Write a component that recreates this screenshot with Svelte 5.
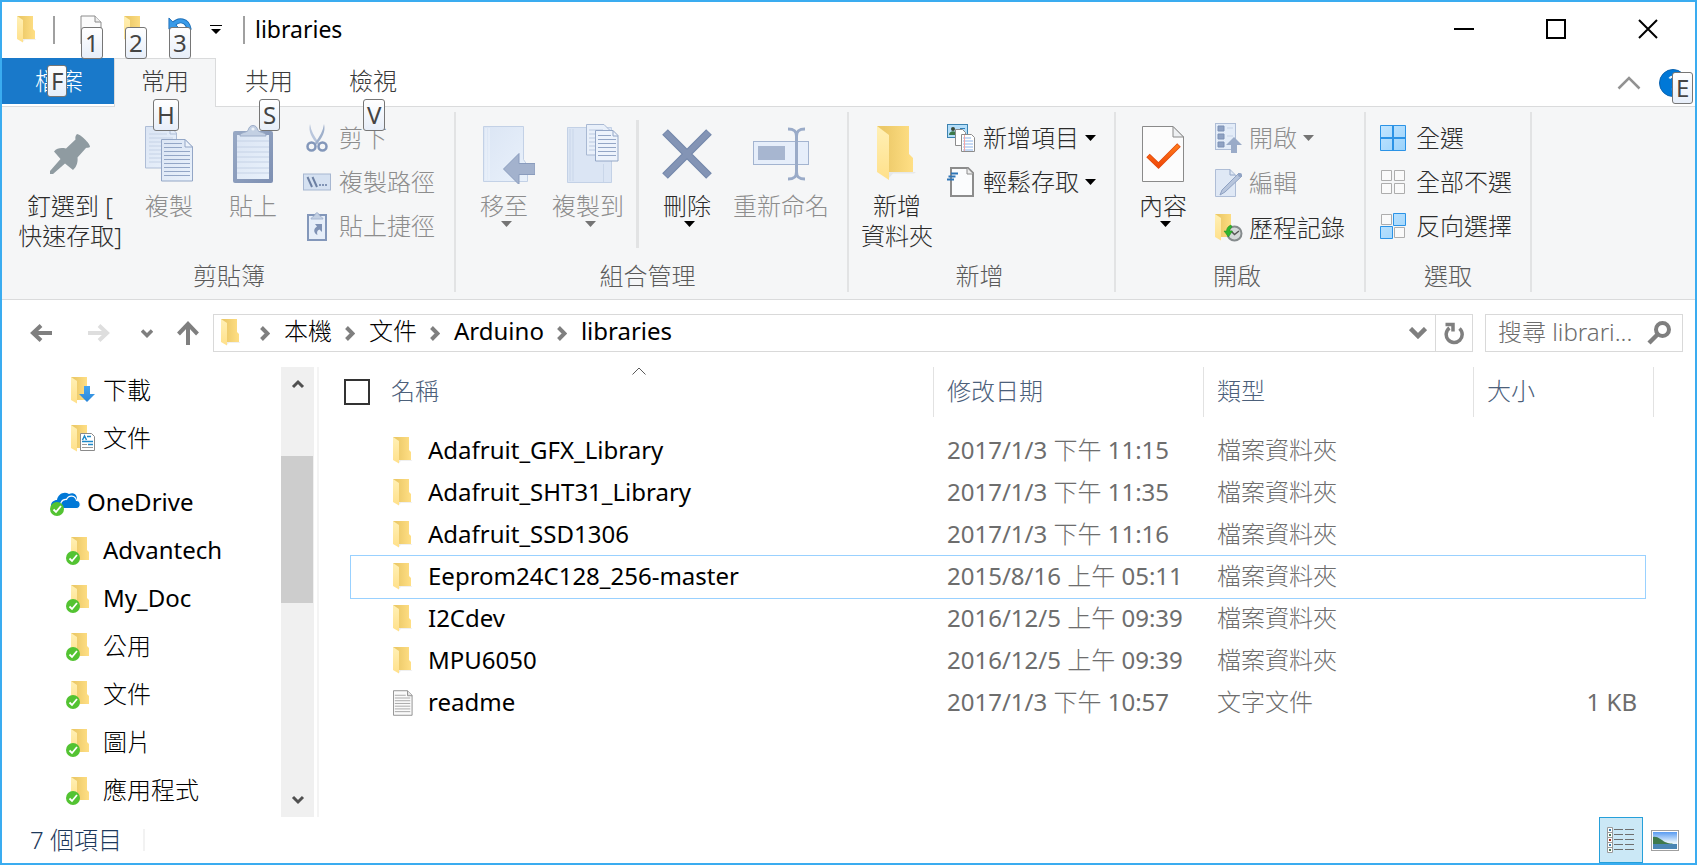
<script>
  const crumbs = ['本機', '文件', 'Arduino', 'libraries'];

  const quickAccess = [
    { name: '下載', badge: 'down' },
    { name: '文件', badge: 'doc' }
  ];
  const cloudFolders = ['Advantech', 'My_Doc', '公用', '文件', '圖片', '應用程式'];

  const files = [
    { name: 'Adafruit_GFX_Library', day: '2017/1/3', half: '下午', time: '11:15', type: '檔案資料夾', size: '' },
    { name: 'Adafruit_SHT31_Library', day: '2017/1/3', half: '下午', time: '11:35', type: '檔案資料夾', size: '' },
    { name: 'Adafruit_SSD1306', day: '2017/1/3', half: '下午', time: '11:16', type: '檔案資料夾', size: '' },
    { name: 'Eeprom24C128_256-master', day: '2015/8/16', half: '上午', time: '05:11', type: '檔案資料夾', size: '' },
    { name: 'I2Cdev', day: '2016/12/5', half: '上午', time: '09:39', type: '檔案資料夾', size: '' },
    { name: 'MPU6050', day: '2016/12/5', half: '上午', time: '09:39', type: '檔案資料夾', size: '' },
    { name: 'readme', day: '2017/1/3', half: '下午', time: '10:57', type: '文字文件', size: '1 KB', text: true }
  ];
  let focused = $state(3);
  let query = $state('');

  // Latin names are set in the regular weight, Chinese ones in the light weight.
  const isLatin = (s) => /^[A-Za-z]/.test(s);
</script>

{#snippet folder()}
  <svg class="folder" width="20" height="28" viewBox="0 0 20 28" aria-hidden="true">
    <path d="M5 23h14.500l-1 .8H8L6 26z" fill="#ececec" />
    <path d="M0 0h16v13l2 2v8H4z" fill="url(#fold-back)" />
    <path d="M0 0l6 4v22.500L0 23z" fill="url(#fold-front)" />
  </svg>
{/snippet}

{#snippet tick()}
  <circle cx="7" cy="7" r="7" fill="#53c332" />
  <path d="M3.500 7.500l2.500 2.500 5-6" fill="none" stroke="#fff" stroke-width="1.800" />
{/snippet}

{#snippet crumbArrow()}
  <svg width="10" height="15" viewBox="0 0 10 15" aria-hidden="true">
    <path d="M1.500 1.500L7.500 7.500l-6 6" fill="none" stroke="#7f7f7f" stroke-width="4" />
  </svg>
{/snippet}

{#snippet caret()}
  <svg class="caret" width="11" height="6" viewBox="0 0 11 6" aria-hidden="true">
    <path d="M0 0h11L5.500 6z" fill="currentColor" />
  </svg>
{/snippet}

{#snippet chevron(d)}
  <svg width="14" height="12" viewBox="0 0 14 12" aria-hidden="true">
    <path {d} fill="none" stroke="#505050" stroke-width="3" />
  </svg>
{/snippet}

<svg class="defs" width="0" height="0" aria-hidden="true">
  <defs>
    <linearGradient id="fold-back" x1="0" y1="0" x2="1" y2="0">
      <stop offset="0.2" stop-color="#ecc968" /><stop offset="1" stop-color="#ffdf85" />
    </linearGradient>
    <linearGradient id="fold-front" x1="0" y1="0" x2="0" y2="1">
      <stop offset="0" stop-color="#fff0b5" /><stop offset="1" stop-color="#ffe08a" />
    </linearGradient>
    <linearGradient id="blue-page" x1="0" y1="0" x2="1" y2="1">
      <stop offset="0" stop-color="#dbe5f4" /><stop offset="1" stop-color="#e9f1fb" />
    </linearGradient>
    <linearGradient id="board" x1="0" y1="0" x2="1" y2="1">
      <stop offset="0" stop-color="#98a9c5" /><stop offset="1" stop-color="#7e90b3" />
    </linearGradient>
    <linearGradient id="orange" x1="0" y1="0" x2="0" y2="1">
      <stop offset="0" stop-color="#ff7a1a" /><stop offset="1" stop-color="#f04a0a" />
    </linearGradient>
    <linearGradient id="down-blue" x1="0" y1="0" x2="0" y2="1">
      <stop offset="0" stop-color="#45a5f0" /><stop offset="1" stop-color="#2b87d8" />
    </linearGradient>
    <linearGradient id="tile-on" x1="0" y1="0" x2="1" y2="1">
      <stop offset="0" stop-color="#c2e5ff" /><stop offset="1" stop-color="#9bd3fb" />
    </linearGradient>
    <linearGradient id="sky" x1="0" y1="0" x2="0" y2="1">
      <stop offset="0" stop-color="#5a9bf0" /><stop offset="0.6" stop-color="#e4f2fc" />
    </linearGradient>
  </defs>
</svg>

<div class="window">
  <header class="titlebar">
    {@render folder()}
    <span class="bar"></span>
    <div class="qat">
      <button aria-label="內容">
        <svg width="22" height="30" viewBox="0 0 22 30"><path d="M1 1h14l6 6v22H1z" fill="#fbfbfb" stroke="#8c8c8c" /><path d="M15 1v6h6" fill="#eee" stroke="#8c8c8c" /></svg>
        <kbd class="tip">1</kbd>
      </button>
      <button aria-label="新增資料夾">{@render folder()}<kbd class="tip">2</kbd></button>
      <button aria-label="復原">
        <svg width="24" height="26" viewBox="0 0 26 28"><path d="M6 8C11 2 21 2 23 14" fill="none" stroke="#1d6fb8" stroke-width="5.500" /><path d="M1 1v12h12z" fill="#3a9be8" stroke="#1d6fb8" /><path d="M5 9C11 2 21 2 23 13.500" fill="none" stroke="#3a9be8" stroke-width="3.500" /></svg>
        <kbd class="tip">3</kbd>
      </button>
    </div>
    <button class="more" aria-label="自訂快速存取工具列">
      <svg width="12" height="10" viewBox="0 0 12 10"><path d="M0 0h12v1H0zM1 4h10L6 9z" /></svg>
    </button>
    <span class="bar"></span>
    <h1>libraries</h1>
    <div class="controls">
      <button aria-label="最小化"><svg width="20" height="20" viewBox="0 0 20 20"><path d="M0 9h20v2H0z" /></svg></button>
      <button aria-label="最大化"><svg width="20" height="20" viewBox="0 0 20 20"><path d="M1 1h18v18H1z" fill="none" stroke="#000" stroke-width="2" /></svg></button>
      <button aria-label="關閉"><svg width="20" height="20" viewBox="0 0 20 20"><path d="M1 1l18 18M19 1L1 19" fill="none" stroke="#000" stroke-width="2" /></svg></button>
    </div>
  </header>

  <nav class="tabs">
    <button class="tab file">檔案<kbd class="tip mid">F</kbd></button>
    <button class="tab active">常用<kbd class="tip low">H</kbd></button>
    <button class="tab">共用<kbd class="tip low">S</kbd></button>
    <button class="tab">檢視<kbd class="tip low">V</kbd></button>
    <span class="fill"></span>
    <button class="plain" aria-label="最小化功能區">
      <svg width="24" height="14" viewBox="0 0 24 14"><path d="M1.500 12.500L12 2l10.500 10.500" fill="none" stroke="#929292" stroke-width="2.500" /></svg>
    </button>
    <button class="plain help" aria-label="說明">
      <svg width="28" height="28" viewBox="0 0 28 28"><circle cx="14" cy="14" r="13.500" fill="#0078d7" stroke="#0a63b0" /><path d="M10.500 9.500c1.500-3 7.500-2.500 7 1.200-.3 2.600-3.500 2.700-3.500 6.300M14 19v2.500" fill="none" stroke="#e6f2fc" stroke-width="2.200" /></svg>
      <kbd class="tip corner">E</kbd>
    </button>
  </nav>

  <section class="ribbon">
    <div class="group clipboard">
      <div class="tools">
        <button class="big wide">
          <span class="pic"><svg width="40" height="40" viewBox="0 0 40 40"><path d="M27 0c2 .5 4 1.500 6.500 4S40 10 40 13c-1.500 1-3 .5-4 1l-8.500 9.500c.5 4-.5 9-4.500 12.500L15 29.500 3 40H0v-3l10.500-12L4 17.500C7 14 11 13.500 16 14.500l9.500-9C25 3.500 25.500 1.500 27 0z" fill="#8f9ba1" /></svg></span>
          <span>釘選到 [<br />快速存取]</span>
        </button>
        <button class="big off">
          <span class="pic"><svg width="48" height="56" viewBox="0 0 48 56"><path d="M.5.500H25l6.500 6.500v35H.5z" fill="url(#blue-page)" stroke="#aebdd6" /><path d="M25 .5V8h6" fill="none" stroke="#aebdd6" /><path d="M4 8h18M4 12h24M4 16h24M4 20h24M4 24h24M4 28h24M4 32h24M4 36h24" stroke="#c5d2e6" /><path d="M16.500 13.500H40l7.500 7.500v34h-31z" fill="url(#blue-page)" stroke="#93a6c6" /><path d="M40 13.500V21h7.500z" fill="#edf3fb" stroke="#93a6c6" /><path d="M19 17.500h18M19 21.500h18M19 25.500h26M19 29.500h26M19 33.500h26M19 37.500h26M19 41.500h26M19 45.500h26M19 49.500h26" stroke="#93a6c6" /></svg></span>
          <span>複製</span>
        </button>
        <button class="big off">
          <span class="pic"><svg width="42" height="58" viewBox="0 0 42 58"><rect x="1" y="6" width="40" height="52" rx="2" fill="url(#board)" /><rect x="5" y="10" width="32" height="44" fill="url(#blue-page)" /><path d="M5 16h32M5 22h32M5 27h32M5 32h32M5 37h32M5 43h32M5 48h32" stroke="#c5d2e6" /><path d="M8 11c0-4 6-3 8-5.500C17 2 18.500.5 21 .5S25 2 26 5.500C28 8 34 7 34 11z" fill="#c3d0e3" stroke="#9cadc8" /><circle cx="21" cy="4" r="1.600" fill="#eef3fa" /></svg></span>
          <span>貼上</span>
        </button>
        <div class="stack">
          <button class="small off">
            <svg width="28" height="30" viewBox="0 0 28 30"><path d="M7 1c1 7 4 12 9 19l-1.500 1.500C9 15 5 9 7 1z" fill="#b9c6dc" /><path d="M21 1c-1 7-4 12-9 19l1.500 1.500C19 15 23 9 21 1z" fill="#9fb0cb" /><circle cx="8.500" cy="23.500" r="4" fill="none" stroke="#8397ba" stroke-width="2.500" /><circle cx="19.500" cy="23.500" r="4" fill="none" stroke="#8397ba" stroke-width="2.500" /></svg>
            剪下
          </button>
          <button class="small off">
            <svg width="28" height="18" viewBox="0 0 28 18"><rect x=".5" y="1" width="27" height="16" fill="#d5e1f1" stroke="#a7b7d1" /><path d="M4.500 4l4.500 10M9.500 4l4.500 10" stroke="#6d80a3" stroke-width="2" /><path d="M16 11h2v2h-2zM19 11h2v2h-2zM22 11h2v2h-2z" fill="#8194b5" /></svg>
            複製路徑
          </button>
          <button class="small off">
            <svg width="28" height="30" viewBox="0 0 28 30"><rect x="5" y="4" width="18" height="25" fill="#e6eef9" stroke="#8397ba" stroke-width="2" /><path d="M8 8c0-2 3-2 4-4 .5-3 3.500-3 4 0 1 2 4 2 4 4z" fill="#c3d0e3" stroke="#a7b7d1" /><path d="M12 13h7v8l-2.500-2.500c-3 1-2.500 3.500-2 5.500-4-2-4.500-6-.5-8.500z" fill="#7f92b5" /></svg>
            貼上捷徑
          </button>
        </div>
      </div>
      <div class="caption">剪貼簿</div>
    </div>

    <div class="group organize">
      <div class="tools">
        <button class="big off">
          <span class="pic"><svg width="62" height="60" viewBox="0 0 62 60"><path d="M10.500 2.500h40v33l4 6v16h-44z" fill="url(#blue-page)" stroke="#c3d1e6" /><path d="M13 4v52M16 4v52" stroke="#edf3fb" /><path d="M46 29.500v10h16v11H46v10L30.500 45z" fill="#a3b2cd" stroke="#8a9cbd" /></svg></span>
          <span>移至</span>{@render caret()}
        </button>
        <button class="big off">
          <span class="pic"><svg width="62" height="60" viewBox="0 0 62 60"><path d="M10.500 3.500h44v55h-44z" fill="#dbe5f4" stroke="#c3d1e6" /><path d="M13 5v52M16 5v52M46.500 40v18" stroke="#c9d6e9" /><path d="M29.500.500H47l5 5V31H29.500z" fill="#e9f0fa" stroke="#a9b9d3" /><path d="M32 6h14M32 10h14M32 14h14M32 18h14M32 22h14M32 26h14" stroke="#bccae0" /><path d="M38.500 6.500H56l5 5V37H38.500z" fill="#edf3fc" stroke="#93a6c6" /><path d="M56 6.500V12h5M41 11.500h13M41 15.500h18M41 19.500h18M41 23.500h18M41 27.500h18M41 31.500h18" fill="none" stroke="#93a6c6" /></svg></span>
          <span>複製到</span>{@render caret()}
        </button>
        <span class="divider"></span>
        <button class="big">
          <span class="pic"><svg width="50" height="50" viewBox="0 0 50 50"><path d="M3 3l44 44M47 3L3 47" stroke="#7286aa" stroke-width="8" /><path d="M3.500 3.500l43 43M46.500 3.500l-43 43" stroke="#8394b5" stroke-width="6" /></svg></span>
          <span>刪除</span>{@render caret()}
        </button>
        <button class="big wide off">
          <span class="pic"><svg width="56" height="54" viewBox="0 0 56 54"><rect x=".5" y="14.500" width="55" height="23" fill="#e6eefa" stroke="#a3b4d0" /><rect x="5" y="19" width="27" height="14" fill="#a7b6d0" /><path d="M35 2c6 0 8.500 2 8.500 7v36c0 5-2.500 7-8.500 7M52 2c-6 0-8.500 2-8.500 7v36c0 5 2.500 7 8.500 7" fill="none" stroke="#9aabc8" stroke-width="3" /></svg></span>
          <span>重新命名</span>
        </button>
      </div>
      <div class="caption">組合管理</div>
    </div>

    <div class="group create">
      <div class="tools">
        <button class="big">
          <span class="pic"><svg width="40" height="56" viewBox="0 0 20 28"><path d="M5 23h14.500l-1 .8H8L6 26z" fill="#e6e8ea" /><path d="M0 0h16v14l2 2v7H4z" fill="url(#fold-back)" /><path d="M0 0l6 4.500V27L0 23z" fill="url(#fold-front)" /></svg></span>
          <span>新增<br />資料夾</span>
        </button>
        <div class="stack">
          <button class="small">
            <svg width="28" height="28" viewBox="0 0 28 28"><rect x=".5" y=".5" width="20" height="13" fill="#b4defa" stroke="#3b82b0" /><circle cx="6" cy="5" r="2" fill="#3a4a3a" /><path d="M2 11c0-5 8-5 8 0z" fill="#3d7a4a" /><path d="M13 4.500h5" stroke="#2e7fb8" /><path d="M8.500 5.500h7l3 3v13h-10z" fill="#fff" stroke="#8c8c8c" /><path d="M14.500 10.500h10l3 3v14h-13z" fill="#fff" stroke="#8c8c8c" /><path d="M16 14h8M16 17h10M16 20h10M16 23h10M16 26h10" stroke="#8db4ea" /><path d="M17.500 11v16" stroke="#f3a6a6" /></svg>
            新增項目{@render caret()}
          </button>
          <button class="small">
            <svg width="28" height="30" viewBox="0 0 28 30"><path d="M4 1h17l5 5v23H4z" fill="#fbfcfd" stroke="#8c8c8c" stroke-width="2" /><path d="M20 1v6h6" fill="#eee" stroke="#8c8c8c" /><path d="M4 6.500h7M1.500 9.500h7M0 12.500h7" stroke="#2e75b6" stroke-width="2" /></svg>
            輕鬆存取{@render caret()}
          </button>
        </div>
      </div>
      <div class="caption">新增</div>
    </div>

    <div class="group open">
      <div class="tools">
        <button class="big">
          <span class="pic"><svg width="42" height="56" viewBox="0 0 42 56"><path d="M.5.500H31L41.500 11v44.500H.5z" fill="#fcfcfc" stroke="#8a8a8a" /><path d="M31 .5V11h10.500z" fill="#eef0f2" stroke="#8a8a8a" /><path d="M6 29.500l10.500 10L37 19" fill="none" stroke="#e0480c" stroke-width="5" /><path d="M6.500 30l10 9.500L36.500 19.500" fill="none" stroke="url(#orange)" stroke-width="3.500" /></svg></span>
          <span>內容</span>{@render caret()}
        </button>
        <div class="stack">
          <button class="small off">
            <svg width="28" height="30" viewBox="0 0 28 30"><rect x=".5" y=".5" width="20" height="26" fill="#e3ecf8" stroke="#aebdd6" /><path d="M3 3h6v5H3zM3 11h6v5H3zM3 19h6v5H3z" fill="#8fa2c3" stroke="#7d91b5" /><path d="M12 5h6M12 13h6" stroke="#c5d2e6" /><path d="M19 14l8 8h-5v8h-6v-8h-5z" fill="#9aabc8" /></svg>
            開啟{@render caret()}
          </button>
          <button class="small off">
            <svg width="28" height="30" viewBox="0 0 28 30"><path d="M.5 1.500H15l5.500 5.500v21.500H.5z" fill="#dfe8f5" stroke="#aebdd6" /><path d="M15 1.500V7h5" fill="none" stroke="#93a6c6" /><path d="M24 5l3 3L10 24l-5 3 2-5z" fill="#b7c5dc" stroke="#8fa2c3" /><circle cx="25" cy="7" r="2" fill="#8fa2c3" /></svg>
            編輯
          </button>
          <button class="small">
            <svg width="28" height="28" viewBox="0 0 28 28"><path d="M0 0h16v13l2 2v8H4z" fill="url(#fold-back)" /><path d="M0 0l6 4v22.500L0 23z" fill="url(#fold-front)" /><circle cx="19.500" cy="19.500" r="7" fill="#d4d8d9" stroke="#858b8d" stroke-width="2" /><path d="M16 17l3.500 3.500L24 17" fill="none" stroke="#555" stroke-width="1.500" /><path d="M16 11c-3 1-4.500 3.500-4.500 6H9l4.500 6 4-6H15c0-2 .5-3 2-4z" fill="#2fb52f" stroke="#1c8a1c" stroke-width=".5" /></svg>
            歷程記錄
          </button>
        </div>
      </div>
      <div class="caption">開啟</div>
    </div>

    <div class="group select">
      <div class="tools">
        <div class="stack">
          <button class="small">
            <svg width="28" height="26" viewBox="0 0 28 26"><path d="M.5.500h25v25H.5z" fill="url(#tile-on)" stroke="#2b93e6" /><path d="M13 0v26M0 13h26" stroke="#2b93e6" stroke-width="2" /></svg>
            全選
          </button>
          <button class="small">
            <svg width="28" height="26" viewBox="0 0 28 26"><path d="M1.500 1.500h10v10h-10zM14.500 1.500h10v10h-10zM1.500 14.500h10v10h-10zM14.500 14.500h10v10h-10z" fill="#fafafa" stroke="#adadad" /></svg>
            全部不選
          </button>
          <button class="small">
            <svg width="28" height="26" viewBox="0 0 28 26"><path d="M1.500 1.500h10v10h-10zM14.500 14.500h10v10h-10z" fill="#fafafa" stroke="#adadad" /><path d="M13.500.500h12v12h-12zM.5 13.500h12v12H.5z" fill="url(#tile-on)" stroke="#2b93e6" /></svg>
            反向選擇
          </button>
        </div>
      </div>
      <div class="caption">選取</div>
    </div>
  </section>

  <div class="location">
    <div class="history">
      <button aria-label="上一頁"><svg width="22" height="18" viewBox="0 0 22 18"><path d="M11 1.500L3 9l8 7.500M3 9h19" fill="none" stroke="#7f7f7f" stroke-width="4" /></svg></button>
      <button aria-label="下一頁" disabled><svg width="22" height="18" viewBox="0 0 22 18"><path d="M11 1.500L19 9l-8 7.500M19 9H0" fill="none" stroke="#dedede" stroke-width="4" /></svg></button>
      <button class="slim" aria-label="最近的位置"><svg width="12" height="9" viewBox="0 0 12 9"><path d="M1 1.500l5 5 5-5" fill="none" stroke="#7f7f7f" stroke-width="3.500" /></svg></button>
      <button class="slim" aria-label="上移"><svg width="22" height="24" viewBox="0 0 22 24"><path d="M1.500 13L11 3l9.500 10M11 3v21" fill="none" stroke="#7f7f7f" stroke-width="4" /></svg></button>
    </div>
    <div class="address">
      {@render folder()}
      <ol>
        {#each crumbs as c}
          <li class:latin={isLatin(c)}>{@render crumbArrow()}<a href="#top">{c}</a></li>
        {/each}
      </ol>
      <button class="drop" aria-label="先前的位置"><svg width="18" height="12" viewBox="0 0 18 12"><path d="M1.500 1.500L9 9l7.500-7.500" fill="none" stroke="#7f7f7f" stroke-width="4.500" /></svg></button>
      <button class="reload" aria-label="重新整理"><svg width="20" height="23" viewBox="0 0 20 23"><path d="M15.500 6.500A8 8 0 1 1 5.500 6" fill="none" stroke="#7f7f7f" stroke-width="3.500" /><path d="M1.500 2.500h7.500v7" fill="none" stroke="#7f7f7f" stroke-width="3.500" /></svg></button>
    </div>
    <label class="search">
      <input type="text" bind:value={query} placeholder="搜尋 librari..." aria-label="搜尋" />
      <svg width="24" height="24" viewBox="0 0 24 24" aria-hidden="true"><circle cx="15.500" cy="8.500" r="6.500" fill="none" stroke="#7f7f7f" stroke-width="4" /><path d="M11 13L2 22" stroke="#7f7f7f" stroke-width="4.500" /></svg>
    </label>
  </div>

  <main>
    <aside>
      <ul class="tree">
        {#each quickAccess as item}
          <li>
            <svg width="24" height="28" viewBox="0 0 24 28" aria-hidden="true">
              <path d="M0 0h16v23H4z" fill="url(#fold-back)" /><path d="M0 0l6 4v22.500L0 23z" fill="url(#fold-front)" />
              {#if item.badge === 'down'}
                <path d="M13 9h6v8h5l-8 8-8-8h5z" fill="url(#down-blue)" />
              {:else}
                <path d="M9.500 8.500h11l3 3v14h-14z" fill="#fff" stroke="#8a8a8a" /><path d="M11.500 15l2-4 2 4M16 11.500h4M11 16.500h11M17 19.500h5" fill="none" stroke="#1e88c8" stroke-width="1.500" /><path d="M11 19.500h5M11 22.500h11" stroke="#9a9a9a" />
              {/if}
            </svg>
            <span>{item.name}</span>
          </li>
        {/each}
        <li class="root latin">
          <svg width="31" height="27" viewBox="0 0 31 27" aria-hidden="true">
            <path d="M2 19c-3-5 1-9 5-9 1-6 7-9 12-6 4-2 8 0 8 5v4H8z" fill="#0078d7" />
            <path d="M13 18.500c-5-4-1-9.500 3.500-9 2-5 9-4.500 10 1 5 0 5 8 0 8z" fill="#0078d7" stroke="#fff" stroke-width="1.200" />
            <g transform="translate(0 12)">{@render tick()}</g>
          </svg>
          <span>OneDrive</span>
        </li>
        {#each cloudFolders as name}
          <li class="synced" class:latin={isLatin(name)}>
            <svg width="24" height="28" viewBox="0 0 24 28" aria-hidden="true">
              <path d="M5 0h16v13l2 2v8H9z" fill="url(#fold-back)" /><path d="M5 0l6 4v19H5z" fill="url(#fold-front)" />
              <g transform="translate(0 14)">{@render tick()}</g>
            </svg>
            <span>{name}</span>
          </li>
        {/each}
      </ul>
      <div class="scroll">
        <button aria-label="向上捲動">{@render chevron('M2 9l5-5 5 5')}</button>
        <span class="above"></span>
        <span class="thumb"></span>
        <span class="below"></span>
        <button aria-label="向下捲動">{@render chevron('M2 3l5 5 5-5')}</button>
      </div>
    </aside>

    <div class="listing">
      <table>
        <colgroup><col /><col class="c2" /><col class="c2" /><col class="c3" /></colgroup>
        <thead>
          <tr>
            <th>
              <div>
                <input type="checkbox" aria-label="全部選取" /><span>名稱</span>
                <svg class="sort" width="14" height="8" viewBox="0 0 14 8" aria-hidden="true"><path d="M.5 7.500L7 1l6.500 6.500" fill="none" stroke="#5a5a5a" /></svg>
              </div>
            </th>
            <th><div><span>修改日期</span></div></th>
            <th><div><span>類型</span></div></th>
            <th><div><span>大小</span></div></th>
          </tr>
        </thead>
        <tbody>
          {#each files as f, i}
            <tr class:focused={i === focused} onclick={() => (focused = i)}>
              <td class="name latin">
                <div>
                  {#if f.text}
                    <svg class="folder" width="22" height="28" viewBox="0 0 22 28" aria-hidden="true"><path d="M.5.500H16L21 5.500v22H.5z" fill="#fafafa" stroke="#8a8a8a" /><path d="M16 .5V6h5" fill="#e4e4e4" stroke="#8a8a8a" /><path d="M2 5.500h12M2 8.500h17M2 11.500h17M2 14.500h17M2 17.500h17M2 20.500h17M2 23.500h17" stroke="#a2a2a2" /></svg>
                  {:else}
                    {@render folder()}
                  {/if}
                  <span>{f.name}</span>
                </div>
              </td>
              <td class="latin">{f.day} <span class="han">{f.half}</span> {f.time}</td>
              <td>{f.type}</td>
              <td class="size latin">{f.size}</td>
            </tr>
          {/each}
        </tbody>
      </table>
    </div>
  </main>

  <footer>
    <span class="count">7 個項目</span>
    <span class="fill"></span>
    <button class="view on" aria-label="詳細資料">
      <svg width="28" height="27" viewBox="0 0 28 27"><path d="M.5.500h5v25h-5zM.5 5.500h5M.5 10.500h5M.5 15.500h5M.5 20.500h5" fill="#fff" stroke="#9a9a9a" /><path d="M7 2.500h9M18 2.500h9M7 7.500h9M18 7.500h9M7 12.500h9M18 12.500h9M7 17.500h9M18 17.500h9M7 22.500h9M18 22.500h9" stroke="#6e6e6e" /><path d="M2 2h2v2H2zM2 17h2v2H2z" fill="#3f7fa8" /><path d="M2 7h2v2H2zM2 22h2v2H2z" fill="#4c7a58" /><path d="M2 12h2v2H2z" fill="#a03020" /></svg>
    </button>
    <button class="view" aria-label="大圖示">
      <svg width="28" height="21" viewBox="0 0 28 21"><rect x=".5" y=".5" width="27" height="20" fill="#fff" stroke="#9f9f9f" /><path d="M2 2h24v17H2z" fill="url(#sky)" /><path d="M2 7c5-1 8 3 12 5s7 1 8 2H2z" fill="#3f7a4c" /><path d="M2 14h24v5H2z" fill="#4a86b4" /></svg>
    </button>
  </footer>
</div>

<style>
  :global(body) {
    margin: 0;
  }
  .defs {
    position: absolute;
  }
  .window {
    box-sizing: border-box;
    min-height: 100vh;
    display: flex;
    flex-direction: column;
    border: 2px solid #3aacf0;
    background: #fff;
    color: #000;
    font: 300 24px/30px 'Noto Sans', 'Noto Sans CJK TC', sans-serif;
  }
  .window :global(svg) {
    display: block;
    flex: none;
  }
  .latin {
    font-weight: 400;
  }
  .han {
    font-weight: 300;
  }
  button {
    border: 0;
    padding: 0;
    background: none;
    font: inherit;
    color: inherit;
  }
  .fill {
    flex: 1;
  }

  .titlebar {
    display: flex;
    align-items: center;
    height: 56px;
    padding-left: 15px;
  }
  .bar {
    width: 2px;
    height: 28px;
    background: #a0a0a0;
  }
  .titlebar > .folder + .bar {
    margin-left: 16px;
  }
  .qat {
    display: flex;
    margin-left: 21px;
  }
  .qat button {
    position: relative;
    width: 44px;
    height: 30px;
    padding-left: 4px;
  }
  .more {
    margin: 0 21px 0 2px;
  }
  h1 {
    margin: 0 0 2px 10px;
    font-size: 23px;
    font-weight: 400;
    flex: 1;
  }
  .controls {
    display: flex;
    align-self: stretch;
    margin-right: 1px;
  }
  .controls button {
    display: grid;
    place-items: center;
    width: 92px;
    padding-bottom: 2px;
  }
  .tip {
    position: absolute;
    left: 5px;
    top: 12px;
    z-index: 1;
    box-sizing: border-box;
    min-width: 20px;
    height: 32px;
    padding: 0 3px;
    border: 1px solid #767676;
    border-radius: 3px;
    background: linear-gradient(#fff, #e7eef9);
    color: #444;
    font: 400 24px/30px 'Noto Sans', sans-serif;
    text-align: center;
  }
  .tip.mid {
    left: 45px;
    top: 7px;
  }
  .tip.low {
    left: 43px;
    top: 41px;
  }
  .active .tip.low {
    left: 38px;
    top: 40px;
  }
  .tip.corner {
    left: 13px;
    top: 14px;
  }

  .tabs {
    display: flex;
    height: 49px;
    background: linear-gradient(#dadbdc, #dadbdc) bottom / 100% 1px no-repeat;
    color: #3b3b3b;
  }
  .tab {
    position: relative;
    width: 104px;
    padding: 0 0 4px 2px;
  }
  .tab.file {
    width: 112px;
    height: 46px;
    background: #1979ca;
    color: #fff;
    padding-bottom: 1px;
  }
  .tab.active {
    width: 102px;
    border: 1px solid #dadbdc;
    border-bottom: 0;
    background: #f5f6f7;
    padding-left: 0;
  }
  .plain {
    position: relative;
    width: 28px;
    margin-right: 16px;
    display: grid;
    place-items: center;
  }
  .help {
    margin-right: 8px;
  }

  .ribbon {
    display: flex;
    height: 180px;
    padding: 5px 0 7px;
    border-bottom: 1px solid #dadbdc;
    background: #f5f6f7;
    color: #2b2b2b;
  }
  .group {
    display: flex;
    flex-direction: column;
    justify-content: space-between;
    border-right: 2px solid #e2e3e4;
    padding: 0 6px;
  }
  .group.clipboard {
    padding-left: 8px;
  }
  .clipboard .tools {
    padding: 0 13px 0 3px;
  }
  .group.organize {
    padding-right: 14px;
  }
  .group.create {
    padding-right: 10px;
  }
  .group.open {
    padding: 0 11px 0 5px;
  }
  .create .tools,
  .open .tools {
    padding-right: 8px;
  }
  .select .tools {
    padding-right: 12px;
  }
  .tools {
    display: flex;
  }
  .caption {
    padding-bottom: 1px;
    color: #5a5a5a;
    text-align: center;
  }
  .big {
    display: flex;
    flex-direction: column;
    align-items: center;
    width: 84px;
    padding-top: 10px;
    white-space: nowrap;
  }
  .big.wide {
    width: 104px;
  }
  .clipboard .big.wide {
    width: 114px;
  }
  .pic {
    display: grid;
    place-items: center;
    height: 64px;
    margin-bottom: 5px;
  }
  .off {
    color: #8d8d8d;
  }
  .caret {
    color: #000;
  }
  .big .caret {
    margin: 0 0 0 5px;
  }
  .off .caret {
    color: #747474;
  }
  .divider {
    width: 3px;
    height: 128px;
    margin: 8px 6px 0;
    background: #e2e3e4;
  }
  .stack {
    padding: 4px 0 0 8px;
  }
  .small {
    display: flex;
    align-items: center;
    gap: 8px;
    height: 44px;
    white-space: nowrap;
  }
  .create .caret {
    margin-left: -2px;
  }
  .open .small {
    gap: 6px;
    height: 45px;
  }
  .open .stack {
    padding: 3px 0 0 10px;
  }

  .location {
    display: flex;
    align-items: center;
    gap: 12px;
    padding: 14px 12px 15px 28px;
    height: 38px;
  }
  .history {
    display: flex;
    align-items: center;
    width: 171px;
  }
  .history button {
    margin-right: 36px;
  }
  .history button:nth-child(2) {
    margin-right: 31px;
  }
  .history .slim {
    margin-right: 24px;
  }
  .history .slim:last-child {
    margin: 0;
  }
  .address,
  .search {
    box-sizing: border-box;
    height: 38px;
    display: flex;
    align-items: center;
    border: 1px solid #d9d9d9;
  }
  .address {
    flex: 1;
    padding-left: 7px;
  }
  ol,
  ul {
    margin: 0;
    padding: 0;
    list-style: none;
  }
  ol {
    flex: 1;
    display: flex;
    margin-left: 19px;
    padding-bottom: 4px;
  }
  ol li {
    display: flex;
    align-items: center;
    gap: 14px;
    margin-right: 13px;
  }
  ol svg {
    margin-top: 4px;
  }
  ol a {
    color: inherit;
    text-decoration: none;
  }
  .drop {
    margin-right: 8px;
  }
  .reload {
    align-self: stretch;
    width: 37px;
    border-left: 1px solid #d9d9d9;
    display: grid;
    place-items: center;
  }
  .search {
    width: 198px;
    padding: 0 11px 0 12px;
  }
  .search input {
    flex: 1;
    min-width: 0;
    height: 30px;
    margin-bottom: 2px;
    padding: 0;
    border: 0;
    outline: 0;
    background: none;
    font: inherit;
    color: #000;
  }
  .search input::placeholder {
    color: #6d6d6d;
    opacity: 1;
  }

  main {
    flex: 1;
    display: flex;
  }
  aside {
    display: flex;
    width: 315px;
    border-right: 2px solid #f4f4f4;
  }
  .tree {
    flex: 1;
  }
  .tree li {
    display: flex;
    align-items: center;
    gap: 8px;
    height: 48px;
    padding-left: 69px;
  }
  .tree span,
  th span,
  .name span {
    padding-bottom: 2px;
  }
  .tree .root {
    margin-top: 16px;
    padding-left: 48px;
    gap: 6px;
  }
  .tree .synced {
    padding-left: 64px;
    gap: 13px;
  }
  .scroll {
    display: flex;
    flex-direction: column;
    width: 33px;
    margin-right: 3px;
    background: #f0f0f0;
  }
  .scroll button {
    display: grid;
    place-items: center;
    height: 34px;
  }
  .above {
    flex: 55;
  }
  .thumb {
    flex: 147;
    margin-right: 1px;
    background: #cdcdcd;
  }
  .below {
    flex: 180;
  }

  .listing {
    flex: 1;
    padding: 0 41px 0 25px;
  }
  table {
    width: 100%;
    table-layout: fixed;
    border-collapse: collapse;
  }
  .c2 {
    width: 270px;
  }
  .c3 {
    width: 180px;
  }
  th {
    padding: 0 0 13px;
    font-weight: inherit;
    text-align: left;
    color: #4c607a;
  }
  th div {
    position: relative;
    display: flex;
    align-items: center;
    box-sizing: border-box;
    height: 50px;
    padding-left: 13px;
    border-right: 1px solid #e2e2e2;
  }
  th:first-child div {
    padding-left: 0;
  }
  th input {
    appearance: none;
    box-sizing: border-box;
    width: 26px;
    height: 26px;
    margin: 0 21px 0 0;
    border: 2px solid #333;
    background: #fff;
  }
  .sort {
    position: absolute;
    left: calc(50% - 7px);
    top: 0;
  }
  tbody tr {
    position: relative;
    height: 42px;
  }
  .focused .name::after {
    content: '';
    position: absolute;
    inset: -1px 8px -1px 6px;
    border: 1px solid #99d1ff;
  }
  td {
    padding: 0 0 2px 13px;
    color: #6d6d6d;
    white-space: nowrap;
  }
  td.name {
    padding: 0 0 0 49px;
    color: #000;
  }
  td.name div {
    display: flex;
    align-items: center;
    gap: 15px;
  }
  td.name svg {
    width: 20px;
  }
  td.size {
    padding: 0 17px 2px 0;
    text-align: right;
  }

  footer {
    display: flex;
    align-items: center;
    height: 46px;
    padding-right: 8px;
    color: #1e395b;
  }
  .count {
    margin-left: 28px;
    padding-right: 21px;
    border-right: 2px solid #f2f2f2;
    line-height: 22px;
  }
  .view {
    box-sizing: border-box;
    width: 44px;
    height: 46px;
    display: grid;
    place-items: center;
  }
  .view.on {
    border: 1px solid #26a0da;
    background: #cbe8f6;
  }
</style>
